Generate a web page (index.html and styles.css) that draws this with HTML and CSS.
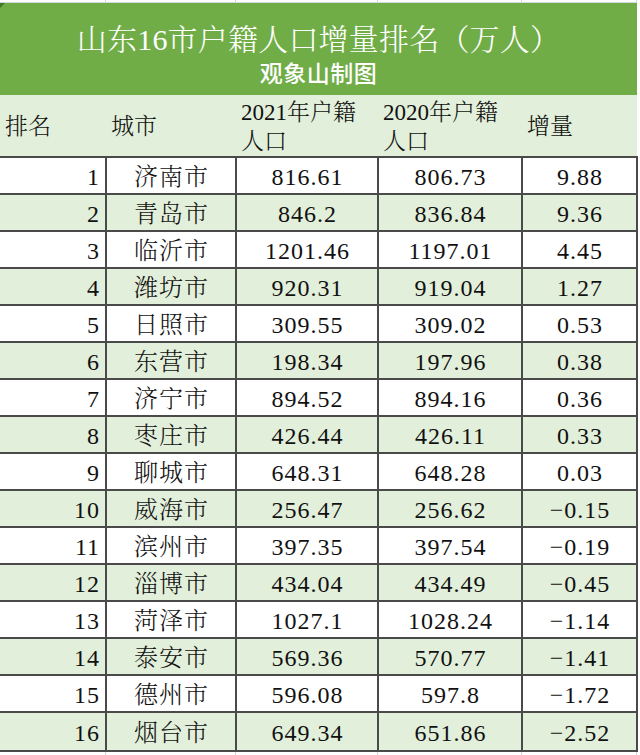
FILE: index.html
```html
<!DOCTYPE html>
<html lang="zh-CN">
<head>
<meta charset="utf-8">
<title>山东16市户籍人口增量排名</title>
<link rel="stylesheet" href="styles.css">
</head>
<body>
<div class="sheet">
  <div class="gridstrip top"><span></span><span></span><span></span><span></span><span></span></div>
  <header class="title">
    <div class="corner"></div>
    <h1>山东16市户籍人口增量排名（万人）</h1>
    <p class="sub">观象山制图</p>
  </header>
  <table class="data">
    <colgroup>
      <col class="c-rank"><col class="c-city"><col class="c-y21"><col class="c-y20"><col class="c-inc">
    </colgroup>
    <thead>
      <tr>
        <th>排名</th>
        <th>城市</th>
        <th class="two">2021年户籍<br>人口</th>
        <th class="two">2020年户籍<br>人口</th>
        <th>增量</th>
      </tr>
    </thead>
    <tbody>
      <tr><td class="rank">1</td><td class="city">济南市</td><td>816.61</td><td>806.73</td><td>9.88</td></tr>
      <tr><td class="rank">2</td><td class="city">青岛市</td><td>846.2</td><td>836.84</td><td>9.36</td></tr>
      <tr><td class="rank">3</td><td class="city">临沂市</td><td>1201.46</td><td>1197.01</td><td>4.45</td></tr>
      <tr><td class="rank">4</td><td class="city">潍坊市</td><td>920.31</td><td>919.04</td><td>1.27</td></tr>
      <tr><td class="rank">5</td><td class="city">日照市</td><td>309.55</td><td>309.02</td><td>0.53</td></tr>
      <tr><td class="rank">6</td><td class="city">东营市</td><td>198.34</td><td>197.96</td><td>0.38</td></tr>
      <tr><td class="rank">7</td><td class="city">济宁市</td><td>894.52</td><td>894.16</td><td>0.36</td></tr>
      <tr><td class="rank">8</td><td class="city">枣庄市</td><td>426.44</td><td>426.11</td><td>0.33</td></tr>
      <tr><td class="rank">9</td><td class="city">聊城市</td><td>648.31</td><td>648.28</td><td>0.03</td></tr>
      <tr><td class="rank">10</td><td class="city">威海市</td><td>256.47</td><td>256.62</td><td>−0.15</td></tr>
      <tr><td class="rank">11</td><td class="city">滨州市</td><td>397.35</td><td>397.54</td><td>−0.19</td></tr>
      <tr><td class="rank">12</td><td class="city">淄博市</td><td>434.04</td><td>434.49</td><td>−0.45</td></tr>
      <tr><td class="rank">13</td><td class="city">菏泽市</td><td>1027.1</td><td>1028.24</td><td>−1.14</td></tr>
      <tr><td class="rank">14</td><td class="city">泰安市</td><td>569.36</td><td>570.77</td><td>−1.41</td></tr>
      <tr><td class="rank">15</td><td class="city">德州市</td><td>596.08</td><td>597.8</td><td>−1.72</td></tr>
      <tr class="last"><td class="rank">16</td><td class="city">烟台市</td><td>649.34</td><td>651.86</td><td>−2.52</td></tr>
    </tbody>
  </table>
  <div class="gridstrip bottom"><span></span><span></span><span></span><span></span><span></span></div>
</div>
</body>
</html>
```

FILE: styles.css
```css
* { box-sizing: border-box; }

html, body {
  margin: 0;
  padding: 0;
  background: #ffffff;
}

body {
  font-family: "Liberation Serif", "Noto Serif CJK SC", "Noto Sans CJK SC", serif;
  color: #111111;
}

.sheet {
  width: 637px;
}

.gridstrip {
  display: grid;
  grid-template-columns: 106px 130px 142px 144px 115px;
}

.gridstrip span {
  border-right: 1px solid #d4d6de;
}

.gridstrip.top {
  height: 3px;
  border-bottom: 1px solid #d4d6de;
}

.gridstrip.bottom {
  height: 3px;
}

.title {
  position: relative;
  background: #70ad47;
  color: #ffffff;
  text-align: center;
  height: 92px;
  padding-top: 19px;
}

.corner {
  position: absolute;
  left: 0;
  top: 0;
  width: 0;
  height: 0;
  border-top: 5px solid #3f7a26;
  border-right: 5px solid transparent;
}

.title h1 {
  margin: 0;
  font-size: 30px;
  line-height: 36px;
  font-weight: 300;
  letter-spacing: 0.2px;
}

.title .sub {
  margin: 0;
  font-family: "Noto Sans CJK SC", sans-serif;
  font-size: 23px;
  line-height: 28px;
  font-weight: 500;
  letter-spacing: 0.5px;
}

.data {
  width: 637px;
  table-layout: fixed;
  border-collapse: collapse;
  font-size: 24px;
  font-weight: 300;
}

.c-rank { width: 106px; }
.c-city { width: 130px; }
.c-y21 { width: 142px; }
.c-y20 { width: 144px; }
.c-inc { width: 115px; }

.data thead tr {
  height: 62px;
  background: #e2efda;
}

.data th {
  text-align: left;
  font-weight: 300;
  font-size: 23px;
  line-height: 29px;
  padding: 2px 0 0 5px;
  vertical-align: middle;
  white-space: nowrap;
}

.data tbody tr {
  height: 37px;
}

.data tbody tr.last {
  height: 39px;
}

.data tbody tr:nth-child(even) {
  background: #e2efda;
}

.data td {
  border: 2px solid #4a4a4a;
  text-align: center;
  padding: 3px 0 0 1px;
  line-height: 30px;
  white-space: nowrap;
  letter-spacing: 1px;
}

.data td:first-child {
  border-left: none;
}

.data td.rank {
  text-align: right;
  padding-right: 5px;
}

.data td.city {
  letter-spacing: 1px;
}
```
